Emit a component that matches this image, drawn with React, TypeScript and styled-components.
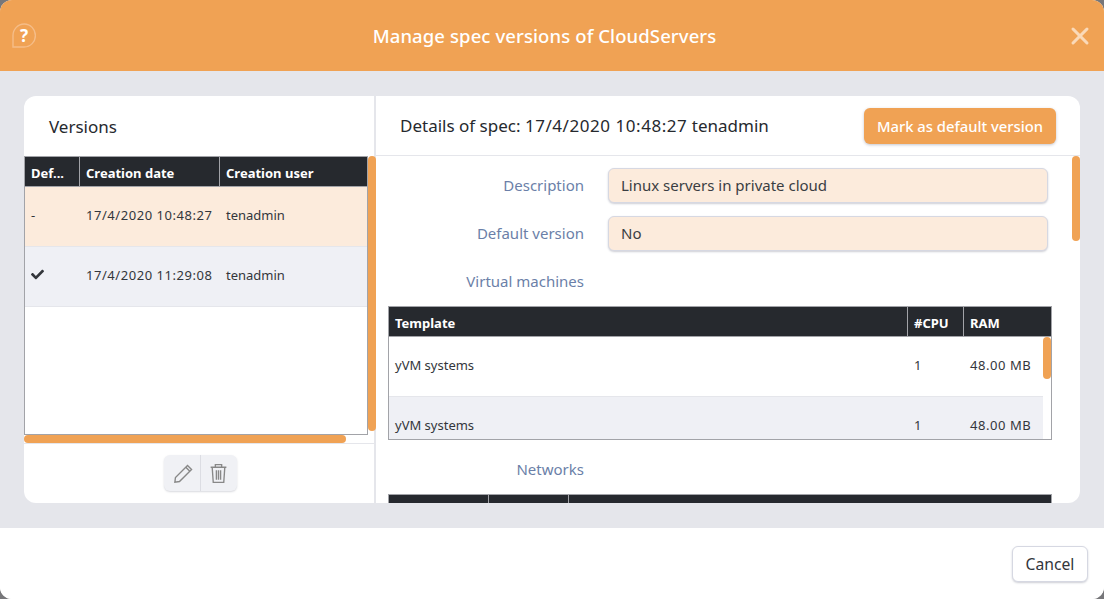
import { createGlobalStyle, styled } from "styled-components";
import { FaCheck } from "react-icons/fa";
import { X } from "lucide-react";

const GlobalStyle = createGlobalStyle`
  html, body {
    margin: 0;
    padding: 0;
    background: #77777a;
    overflow: hidden;
  }
  * {
    box-sizing: border-box;
  }
`;

export default function App() {
  return (
    <>
      <GlobalStyle />
      <Modal>
        <Header>
          <HelpIcon width="24" height="25" viewBox="0 0 24 25">
            <path d="M1 24 V12.5 A11.2 11.5 0 1 1 12.2 24 Z" />
            <HelpMark x="12" y="18.5">?</HelpMark>
          </HelpIcon>
          <Title>Manage spec versions of CloudServers</Title>
          <CloseButton>
            <X size={28} strokeWidth={2.6} />
          </CloseButton>
        </Header>
        <Body>
          <Card>
            <LeftPanel>
              <LeftTitle>Versions</LeftTitle>
              <LeftScroll>
                <VersionsTable>
                  <HeadRow $cols="54px 140px 1fr">
                    <HeadCell>Def...</HeadCell>
                    <HeadCell>Creation date</HeadCell>
                    <HeadCell>Creation user</HeadCell>
                  </HeadRow>
                  <Row $cols="54px 140px 1fr" $bg="#fcebdc">
                    <Cell>-</Cell>
                    <Cell><Stamp>17/4/2020 10:48:27</Stamp></Cell>
                    <Cell>tenadmin</Cell>
                  </Row>
                  <Row $cols="54px 140px 1fr" $bg="#eff0f5">
                    <Cell>
                      <FaCheck size={13} />
                    </Cell>
                    <Cell><Stamp>17/4/2020 11:29:08</Stamp></Cell>
                    <Cell>tenadmin</Cell>
                  </Row>
                </VersionsTable>
                <VerticalBar />
              </LeftScroll>
              <HorizontalBar />
              <LeftFooter>
                <ButtonGroup>
                  <GroupButton>
                    <svg width="23" height="23" viewBox="0 0 20 20" fill="none" stroke="#888888" strokeWidth="1.2">
                      <path d="M2.5 17.5 L3 13.5 L13.5 3 L17 6.5 L6.5 17 Z" />
                      <path d="M12 4.5 L15.5 8" />
                    </svg>
                  </GroupButton>
                  <GroupButton>
                    <svg width="21" height="21" viewBox="0 0 20 20" fill="none" stroke="#888888" strokeWidth="1.3">
                      <path d="M2.5 4 H17.5" />
                      <path d="M7 4 V1.5 H13 V4" />
                      <path d="M4 4 L5 18.5 H15 L16 4" />
                      <path d="M8 6.8 V16 M10 6.8 V16 M12 6.8 V16" />
                    </svg>
                  </GroupButton>
                </ButtonGroup>
              </LeftFooter>
            </LeftPanel>
            <RightPanel>
              <RightHeader>
                <DetailsTitle>
                  Details of spec: <Stamp>17/4/2020 10:48:27</Stamp> tenadmin
                </DetailsTitle>
                <PrimaryButton>Mark as default version</PrimaryButton>
              </RightHeader>
              <RightScroll>
                <FormRow>
                  <Label>Description</Label>
                  <Field>Linux servers in private cloud</Field>
                </FormRow>
                <FormRow>
                  <Label>Default version</Label>
                  <Field>No</Field>
                </FormRow>
                <SectionLabel>Virtual machines</SectionLabel>
                <NestedTable>
                  <HeadRow $cols="518px 56px 1fr">
                    <HeadCell>Template</HeadCell>
                    <HeadCell>#CPU</HeadCell>
                    <HeadCell>RAM</HeadCell>
                  </HeadRow>
                  <NestedRows>
                    <NestedList>
                      <Row $cols="518px 56px 1fr" $bg="#fff">
                        <Cell>yVM systems</Cell>
                        <Cell>1</Cell>
                        <Cell><Stamp>48.00 MB</Stamp></Cell>
                      </Row>
                      <Row $cols="518px 56px 1fr" $bg="#eff0f5">
                        <Cell>yVM systems</Cell>
                        <Cell>1</Cell>
                        <Cell><Stamp>48.00 MB</Stamp></Cell>
                      </Row>
                    </NestedList>
                    <NestedBar />
                  </NestedRows>
                </NestedTable>
                <SectionLabel>Networks</SectionLabel>
                <NetworksTable>
                  <HeadRow $cols="99px 80px 1fr">
                    <HeadCell />
                    <HeadCell />
                    <HeadCell />
                  </HeadRow>
                </NetworksTable>
                <RightBar />
              </RightScroll>
            </RightPanel>
          </Card>
        </Body>
        <Footer>
          <CancelButton>Cancel</CancelButton>
        </Footer>
      </Modal>
    </>
  );
}

const font = `"Noto Sans", "Liberation Sans", sans-serif`;

const Modal = styled.div`
  width: 1104px;
  height: 599px;
  display: flex;
  flex-direction: column;
  background: #fff;
  border-radius: 12px;
  overflow: hidden;
  font-family: ${font};
  color: #26292e;
`;

const Header = styled.div`
  height: 71px;
  flex: none;
  display: flex;
  align-items: center;
  justify-content: space-between;
  padding: 0 10px 0 12px;
  background: #f0a254;
  color: #fff;
`;

const HelpIcon = styled.svg`
  fill: none;
  stroke: #f5bd88;
  stroke-width: 1.4;
`;

const HelpMark = styled.text`
  fill: #fff;
  stroke: none;
  font-size: 17px;
  font-weight: 700;
  text-anchor: middle;
`;

const Title = styled.div`
  font-size: 18.5px;
  font-weight: 500;
  letter-spacing: 0.1px;
  margin-right: 13px;
`;

const CloseButton = styled.div`
  display: flex;
  color: #fad9b8;
`;

const Stamp = styled.span`
  letter-spacing: 0.55px;
`;

const Body = styled.div`
  height: 457px;
  flex: none;
  padding: 25px 24px;
  background: #e5e6eb;
`;

const Card = styled.div`
  height: 100%;
  display: flex;
  background: #fff;
  border-radius: 12px;
  overflow: hidden;
`;

const LeftPanel = styled.div`
  width: 352px;
  flex: none;
  display: flex;
  flex-direction: column;
  border-right: 2px solid #e5e6eb;
`;

const LeftTitle = styled.div`
  height: 60px;
  flex: none;
  display: flex;
  align-items: center;
  padding-left: 25px;
  font-size: 17px;
`;

const LeftScroll = styled.div`
  height: 279px;
  flex: none;
  display: flex;
`;

const VersionsTable = styled.div`
  width: 344px;
  flex: none;
  border: 1px solid #a2a3a8;
  background: #fff;
`;

const VerticalBar = styled.div`
  width: 8px;
  height: 275px;
  flex: none;
  background: #f0a254;
  border-radius: 4px;
`;

const HorizontalBar = styled.div`
  width: 322px;
  height: 8px;
  flex: none;
  background: #f0a254;
  border-radius: 4px;
`;

const LeftFooter = styled.div`
  flex: 1;
  display: flex;
  justify-content: center;
  padding: 11px 0 0 3px;
  border-top: 1px solid #e5e6eb;
`;

const ButtonGroup = styled.div`
  width: 73px;
  height: 36px;
  display: flex;
  border-radius: 6px;
  background: #f0f1f5;
  box-shadow: 0 1px 2px rgba(60, 64, 90, 0.2);
`;

const GroupButton = styled.div`
  flex: 1;
  display: flex;
  align-items: center;
  justify-content: center;
  &:first-child {
    padding-left: 2px;
  }
  & + & {
    padding-right: 2px;
    border-left: 1px solid #dcdde3;
  }
`;

const HeadRow = styled.div<{ $cols: string }>`
  height: 30px;
  display: grid;
  grid-template-columns: ${(p) => p.$cols};
  background: #26292e;
  border-bottom: 1px solid #a2a3a8;
`;

const HeadCell = styled.div`
  display: flex;
  align-items: center;
  padding: 2px 0 0 6px;
  font-size: 13px;
  font-weight: 700;
  color: #fff;
  white-space: nowrap;
  & + & {
    border-left: 1px solid #a2a3a8;
  }
`;

const Row = styled.div<{ $cols: string; $bg: string }>`
  height: 60px;
  display: grid;
  grid-template-columns: ${(p) => p.$cols};
  background: ${(p) => p.$bg};
  border-bottom: 1px solid #e5e6eb;
`;

const Cell = styled.div`
  display: flex;
  align-items: center;
  padding: 0 0 4px 6px;
  font-size: 13px;
  color: #33363b;
  white-space: nowrap;
  & + & {
    padding-left: 7px;
  }
`;

const RightPanel = styled.div`
  flex: 1;
  min-width: 0;
  display: flex;
  flex-direction: column;
`;

const RightHeader = styled.div`
  height: 60px;
  flex: none;
  display: flex;
  align-items: center;
  justify-content: space-between;
  padding: 0 24px;
  border-bottom: 1px solid #e5e6eb;
`;

const DetailsTitle = styled.div`
  font-size: 17px;
`;

const PrimaryButton = styled.div`
  width: 192px;
  height: 36px;
  display: flex;
  align-items: center;
  justify-content: center;
  font-size: 14.8px;
  font-weight: 500;
  color: #fff;
  background: #f0a254;
  border-radius: 6px;
  box-shadow: 0 1px 3px rgba(60, 64, 90, 0.3);
`;

const RightScroll = styled.div`
  position: relative;
  flex: 1;
  min-height: 0;
  display: flex;
  flex-direction: column;
  overflow: hidden;
  padding: 12px 28px 0 12px;
`;

const RightBar = styled.div`
  position: absolute;
  top: 0;
  right: 0;
  width: 8px;
  height: 85px;
  background: #f0a254;
  border-radius: 4px;
`;

const FormRow = styled.div`
  flex: none;
  display: flex;
  align-items: center;
  gap: 24px;
  padding-right: 4px;
  margin-bottom: 13px;
`;

const Label = styled.div`
  width: 196px;
  flex: none;
  padding-bottom: 2px;
  text-align: right;
  font-size: 15px;
  color: #6b7fa8;
`;

const Field = styled.div`
  flex: 1;
  height: 35px;
  display: flex;
  align-items: center;
  padding: 0 0 2px 12px;
  font-size: 15px;
  color: #3a3d42;
  background: #fcebdc;
  border: 1px solid #d6d8e2;
  border-radius: 6px;
  box-shadow: 0 1px 2px rgba(60, 64, 90, 0.25);
`;

const SectionLabel = styled(Label)`
  height: 24px;
  line-height: 24px;
  margin-top: 5px;
  margin-bottom: 13px;
`;

const NestedTable = styled.div`
  width: 664px;
  height: 134px;
  flex: none;
  border: 1px solid #a2a3a8;
  overflow: hidden;
  margin-bottom: 12px;
`;

const NestedRows = styled.div`
  display: flex;
  align-items: flex-start;
`;

const NestedList = styled.div`
  flex: 1;
  min-width: 0;
  height: 102px;
  overflow: hidden;
`;

const NestedBar = styled.div`
  width: 8px;
  height: 42px;
  flex: none;
  background: #f0a254;
  border-radius: 4px;
`;

const NetworksTable = styled.div`
  width: 664px;
  flex: none;
  border: 1px solid #a2a3a8;
  border-bottom: none;
`;

const Footer = styled.div`
  height: 71px;
  flex: none;
  display: flex;
  align-items: center;
  justify-content: flex-end;
  padding: 1px 16px 0 0;
  background: #fff;
`;

const CancelButton = styled.div`
  width: 76px;
  height: 36px;
  display: flex;
  align-items: center;
  justify-content: center;
  font-size: 15.7px;
  color: #33363b;
  background: #fff;
  border: 1px solid #d6d8e2;
  border-radius: 6px;
  box-shadow: 0 1px 2px rgba(60, 64, 90, 0.25);
`;
